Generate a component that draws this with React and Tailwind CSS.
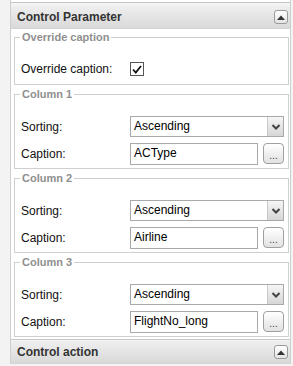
import React from "react";

function CollapseButton() {
  return (
    <span className="flex items-center justify-center w-[14px] h-[14px] rounded-[3px] border border-[#9a9a9a] bg-gradient-to-b from-white to-[#e4e4e4]">
      <svg width="8" height="5" viewBox="0 0 8 5">
        <path d="M0 5 L4 0.5 L8 5 Z" fill="#333" />
      </svg>
    </span>
  );
}

function PanelHeader({ title }) {
  return (
    <div className="flex items-center justify-between h-[23px] pl-[6px] pr-[2px] bg-gradient-to-b from-[#efefef] to-[#d9d9d9] border-b border-[#d4d4d4]">
      <span className="text-[12px] font-bold text-[#333]">{title}</span>
      <CollapseButton />
    </div>
  );
}

function Group({ legend, children }) {
  return (
    <fieldset className="border border-[#cfcfcf] pl-[6px] pr-[4px] pb-[3px] mt-[2px] first:mt-0">
      <legend className="px-[2px] ml-[-1px] text-[11px] leading-[14px] font-bold text-[#8f8f8f]">
        {legend}
      </legend>
      {children}
    </fieldset>
  );
}

function Row({ label, children, className = "" }) {
  return (
    <div className={`flex items-center ${className}`}>
      <span className="w-[109px] shrink-0 text-[12px] text-[#111]">{label}</span>
      {children}
    </div>
  );
}

function SelectBox({ value }) {
  return (
    <div className="flex h-[21px] flex-1 border border-[#a9a9a9] bg-white">
      <span className="flex-1 pl-[3px] text-[12px] leading-[19px] text-black">{value}</span>
      <span className="flex items-center justify-center w-[16px] border-l border-[#c8c8c8] bg-gradient-to-b from-[#f6f6f6] to-[#d6d6d6]">
        <svg width="8" height="6" viewBox="0 0 8 6">
          <path d="M0.5 1 L4 4.5 L7.5 1" stroke="#444" strokeWidth="2" fill="none" />
        </svg>
      </span>
    </div>
  );
}

function CaptionInput({ value }) {
  return (
    <div className="flex flex-1 gap-[5px]">
      <div className="flex-1 h-[22px] border border-[#a9a9a9] bg-white pl-[3px] text-[12px] leading-[19px] text-black">
        {value}
      </div>
      <span className="flex items-end justify-center w-[21px] h-[21px] rounded-[4px] border border-[#a0a0a0] bg-gradient-to-b from-white to-[#e2e2e2] text-[10px] leading-[14px] text-[#444]">
        ...
      </span>
    </div>
  );
}

function ColumnGroup({ legend, caption }) {
  return (
    <Group legend={legend}>
      <Row label="Sorting:" className="mt-[15px]">
        <SelectBox value="Ascending" />
      </Row>
      <Row label="Caption:" className="mt-[6px]">
        <CaptionInput value={caption} />
      </Row>
    </Group>
  );
}

export default function App() {
  return (
    <div className="w-[293px] h-[366px] overflow-hidden bg-[#f3f3f3] font-['Liberation_Sans',Arial,sans-serif]">
      <div className="ml-[10px] mr-[2px] border-l border-r border-[#cfcfcf]">
        <div className="h-[3px] bg-white border-b border-[#c8c8c8]" />
        <div className="h-[3px]" />

        <PanelHeader title="Control Parameter" />
        <div className="bg-white pl-[3px] pr-[1px] pt-[1px] pb-[2px] border-b border-[#c8c8c8]">
          <Group legend="Override caption">
            <Row label="Override caption:" className="mt-[14px] h-[22px] mb-[1px]">
              <span className="flex items-center justify-center w-[14px] h-[14px] border border-[#555] bg-white">
                <svg width="10" height="9" viewBox="0 0 10 9">
                  <path d="M1 4.5 L3.8 7.5 L9 1" stroke="#111" strokeWidth="1.8" fill="none" />
                </svg>
              </span>
            </Row>
          </Group>
          <ColumnGroup legend="Column 1" caption="ACType" />
          <ColumnGroup legend="Column 2" caption="Airline" />
          <ColumnGroup legend="Column 3" caption="FlightNo_long" />
        </div>

        <div className="h-[1px]" />
        <PanelHeader title="Control action" />
      </div>
    </div>
  );
}
